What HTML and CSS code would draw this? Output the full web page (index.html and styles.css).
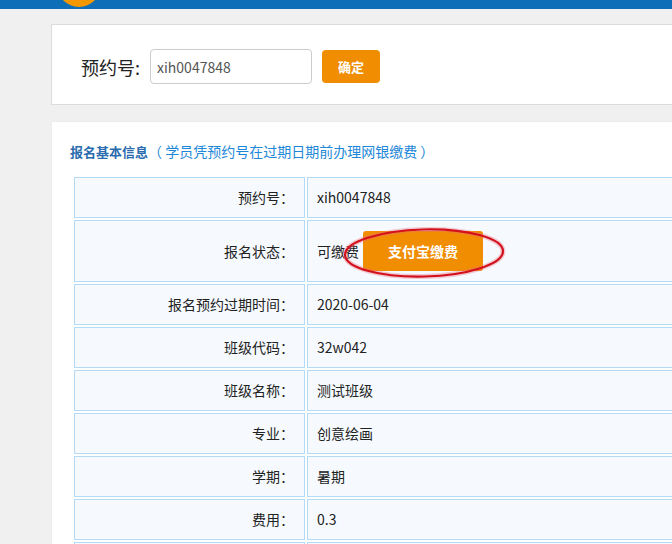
FILE: index.html
```html
<!DOCTYPE html>
<html lang="zh-CN">
<head>
<meta charset="utf-8">
<title>报名缴费</title>
<link rel="stylesheet" href="styles.css">
</head>
<body>
<header class="topbar"><span class="logo"></span></header>
<main class="main">
  <section class="card search">
    <label class="search-label" for="no">预约号:</label>
    <input id="no" class="search-input" type="text" value="xih0047848">
    <button class="btn-ok" type="button">确定</button>
  </section>
  <section class="card info">
    <h2 class="info-title"><b>报名基本信息</b><span class="info-note">（ 学员凭预约号在过期日期前办理网银缴费 ）</span></h2>
    <table class="info-table">
      <tr><th>预约号：</th><td>xih0047848</td></tr>
      <tr class="tall"><th>报名状态：</th><td class="status"><div class="status-in"><span>可缴费</span><button class="btn-pay" type="button">支付宝缴费</button></div>
        <svg class="mark" width="170" height="60" viewBox="0 0 170 60" aria-hidden="true"><g transform="rotate(-1.4 85 30)"><ellipse cx="85" cy="30" rx="79" ry="23.5" fill="none" stroke="#e8707a" stroke-opacity="0.35" stroke-width="5"/><ellipse cx="85" cy="30" rx="79" ry="23.5" fill="none" stroke="#d3101c" stroke-width="2.2"/></g></svg>
      </td></tr>
      <tr><th>报名预约过期时间：</th><td>2020-06-04</td></tr>
      <tr><th>班级代码：</th><td>32w042</td></tr>
      <tr><th>班级名称：</th><td>测试班级</td></tr>
      <tr><th>专业：</th><td>创意绘画</td></tr>
      <tr><th>学期：</th><td>暑期</td></tr>
      <tr><th>费用：</th><td>0.3</td></tr>
      <tr><th>&nbsp;</th><td>&nbsp;</td></tr>
    </table>
  </section>
</main>
</body>
</html>
```
FILE: styles.css
```css
* { box-sizing: border-box; }
html, body { margin: 0; padding: 0; }
body {
  background: #f0f0f0;
  font-family: "Noto Sans CJK SC", "Noto Sans", sans-serif;
  color: #222;
  overflow: hidden;
  width: 672px;
  height: 544px;
}
.topbar {
  position: relative;
  height: 9px;
  background: #0e6fb8;
  overflow: hidden;
}
.logo {
  position: absolute;
  left: 57px;
  top: -37px;
  width: 44px;
  height: 44px;
  border-radius: 50%;
  background: #f39800;
}
.main {
  width: 1100px;
  padding: 15px 0 0 51px;
}
.card {
  background: #fff;
  border: 1px solid #dcdcdc;
}
.search {
  height: 81px;
  display: flex;
  align-items: center;
  padding-left: 29px;
  padding-top: 4px;
}
.search-label {
  font-size: 18px;
  color: #222;
  margin-right: 10px;
}
.search-input {
  width: 162px;
  height: 35px;
  border: 1px solid #ccc;
  border-radius: 4px;
  padding: 0 6px;
  font-family: "Noto Sans CJK SC", sans-serif;
  font-size: 14px;
  color: #555;
  margin-right: 10px;
}
.btn-ok {
  width: 58px;
  height: 33px;
  border: 0;
  border-radius: 4px;
  background: #f08d00;
  color: #fff;
  font-family: "Noto Sans CJK SC", sans-serif;
  font-size: 13px;
  font-weight: bold;
}
.info {
  margin-top: 16px;
  border-color: #ececec;
  padding: 18px 20px 0 18px;
  height: 600px;
}
.info-title {
  margin: 0;
  font-size: 13px;
  line-height: 22px;
  font-weight: normal;
  color: #2b6cae;
}
.info-title b { font-weight: bold; }
.info-note { font-size: 14px; color: #1e88d8; }
.info-table {
  margin: 12px 0 0 2px;
  width: calc(100% - 2px);
  border-collapse: separate;
  border-spacing: 2px;
  font-size: 14px;
  color: #222;
}
.info-table th, .info-table td {
  border: 1px solid #b4dbf6;
  background: #f6faff;
  padding: 10px 9px;
  line-height: 19px;
  height: 41px;
  font-weight: normal;
  text-align: left;
}
.info-table th {
  width: 231px;
  text-align: right;
  padding-right: 10px;
}
.status { position: relative; }
.status-in {
  display: flex;
  align-items: center;
}
.btn-pay {
  margin-left: 4px;
  width: 120px;
  height: 40px;
  border: 0;
  border-radius: 3px;
  background: #f08d00;
  color: #fff;
  font-family: "Noto Sans CJK SC", sans-serif;
  font-size: 14px;
  font-weight: bold;
}
.mark {
  position: absolute;
  left: 31px;
  top: 2px;
  pointer-events: none;
}
```
